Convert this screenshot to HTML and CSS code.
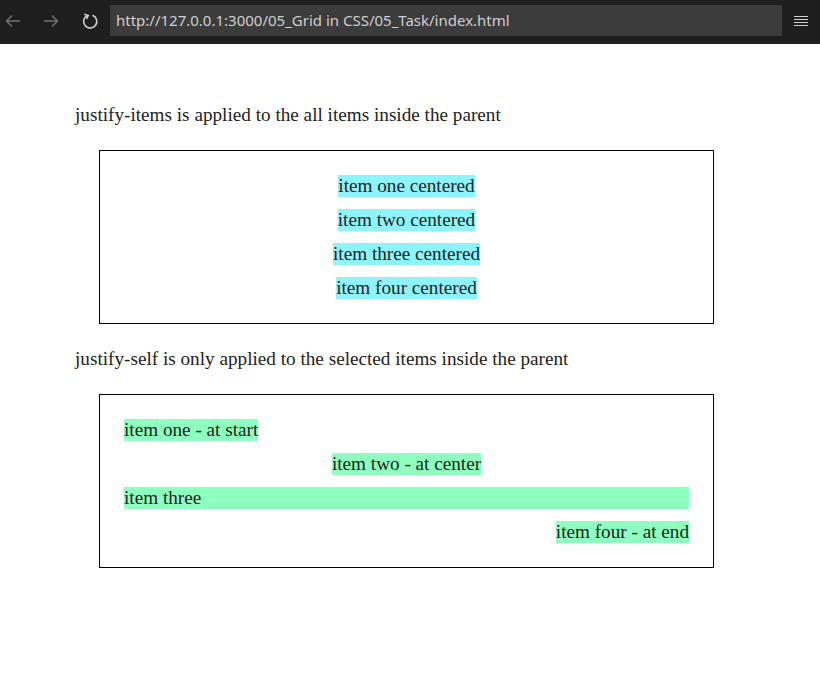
FILE: index.html
```html
<!DOCTYPE html>
<html>
<head>
<meta charset="utf-8">
<link rel="stylesheet" href="styles.css">
</head>
<body>
<div class="toolbar">
  <span class="tb-btn back">
    <svg width="18" height="18" viewBox="0 0 18 18"><path d="M16 9H3M8 3.5L2.5 9L8 14.5" fill="none" stroke="#6f6f6f" stroke-width="1.5"/></svg>
  </span>
  <span class="tb-btn fwd">
    <svg width="18" height="18" viewBox="0 0 18 18"><path d="M2 9H15M10 3.5L15.5 9L10 14.5" fill="none" stroke="#6f6f6f" stroke-width="1.5"/></svg>
  </span>
  <span class="tb-btn reload">
    <svg width="18" height="18" viewBox="0 0 18 18"><path d="M6.2 3.6A6.6 6.6 0 1 0 11.5 3.3" fill="none" stroke="#cfcfcf" stroke-width="1.6"/><path d="M3.2 2.2L7.2 3.4L5.6 7" fill="none" stroke="#cfcfcf" stroke-width="1.6"/></svg>
  </span>
  <div class="url">http://127.0.0.1:3000/05_Grid in CSS/05_Task/index.html</div>
  <span class="menu">
    <svg width="16" height="14" viewBox="0 0 16 14"><path d="M1 2.5H15M1 5.5H15M1 8.5H15M1 11.5H15" stroke="#d0d0d0" stroke-width="1.2"/></svg>
  </span>
</div>
<main class="page">
  <p class="desc">justify-items is applied to the all items inside the parent</p>
  <div class="grid grid-center">
    <div class="item cyan">item one centered</div>
    <div class="item cyan">item two centered</div>
    <div class="item cyan">item three centered</div>
    <div class="item cyan">item four centered</div>
  </div>
  <p class="desc">justify-self is only applied to the selected items inside the parent</p>
  <div class="grid">
    <div class="item green start">item one - at start</div>
    <div class="item green center">item two - at center</div>
    <div class="item green stretch">item three</div>
    <div class="item green end">item four - at end</div>
  </div>
</main>
</body>
</html>
```
FILE: styles.css
```css
html, body {
  margin: 0;
  padding: 0;
  background: #fff;
}
.toolbar {
  height: 44px;
  background: #1f1f1f;
  display: flex;
  align-items: center;
  box-sizing: border-box;
  padding: 0 0 3px 0;
}
.tb-btn {
  display: flex;
  align-items: center;
  justify-content: center;
  width: 18px;
  height: 18px;
}
.back { margin-left: 4px; }
.fwd { margin-left: 20px; }
.reload { margin-left: 21px; }
.url {
  margin-left: 11px;
  width: 672px;
  height: 31px;
  background: #3c3c3c;
  color: #cfcfcf;
  font-family: "Noto Sans", "Open Sans", sans-serif;
  font-size: 15px;
  line-height: 31px;
  padding-left: 6px;
  box-sizing: border-box;
  white-space: nowrap;
}
.menu {
  margin-left: 11px;
  display: flex;
  align-items: center;
}
.page {
  padding: 61px 0 0 75px;
  font-family: "Liberation Serif", "Times New Roman", serif;
  font-size: 19.2px;
  color: #222;
}
.desc {
  margin: 0 0 25px 0;
  line-height: 20px;
}
.grid {
  display: grid;
  width: 615px;
  margin: 0 0 25px 24px;
  border: 1px solid #000;
  padding: 24px;
  box-sizing: border-box;
  row-gap: 12px;
}
.grid-center {
  justify-items: center;
}
.item {
  line-height: 22px;
}
.cyan { background: #8ef4fb; }
.green { background: #8effbf; }
.start { justify-self: start; }
.center { justify-self: center; }
.stretch { justify-self: stretch; }
.end { justify-self: end; }
```
